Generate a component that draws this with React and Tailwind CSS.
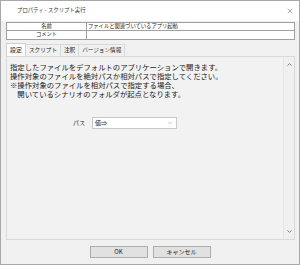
import { ChevronDown, ChevronUp, X } from 'lucide-react';

const jp = "font-['Noto_Sans_CJK_JP','Noto_Sans',sans-serif]";

const lines = [
  '指定したファイルをデフォルトのアプリケーションで開きます。',
  '操作対象のファイルを絶対パスか相対パスで指定してください。',
  '※操作対象のファイルを相対パスで指定する場合、',
  '\u3000開いているシナリオのフォルダが起点となります。',
];

const tabs = ['設定', 'スクリプト', '注釈', 'バージョン情報'];

export default function App() {
  return (
    <div className={`${jp} w-[300px] h-[265px] border border-[#a8a8a8] bg-[#f0f0f0] flex flex-col text-[#1a1a1a]`}>
      {/* Title bar */}
      <div className="h-[20px] bg-white flex items-center justify-between pl-[16px] pr-[5px] flex-shrink-0">
        <span className="text-[5.4px] leading-none text-[#333]">プロパティ - スクリプト実行</span>
        <X size={8} strokeWidth={1.5} className="text-[#555]" />
      </div>

      {/* Property table */}
      <div className="mt-[1px] ml-[5px] w-[289px] border border-[#a0a0a0] bg-white text-[5.3px] leading-none">
        <div className="flex h-[8px] border-b border-[#a0a0a0]">
          <div className="w-[80px] border-r border-[#a0a0a0] flex items-center justify-center">名前</div>
          <div className="flex-1 flex items-center pl-[1px]">ファイルと関連づいているアプリ起動</div>
        </div>
        <div className="flex h-[8px]">
          <div className="w-[80px] border-r border-[#a0a0a0] flex items-center justify-center">コメント</div>
          <div className="flex-1" />
        </div>
      </div>

      {/* Tabs */}
      <div className="mt-[3px] ml-[5px] flex items-end h-[13px] text-[5.6px] leading-none">
        {tabs.map((t, i) => (
          <div
            key={t}
            className={
              i === 0
                ? 'h-[13px] px-[3px] flex items-center bg-white border border-b-0 border-[#d0d0d0] text-[6px]'
                : 'h-[12px] px-[3px] flex items-center bg-[#f0f0f0] border border-b-0 border-l-0 border-[#d9d9d9]'
            }
          >
            {t}
          </div>
        ))}
      </div>

      {/* Panel */}
      <div className="ml-[5px] w-[289px] h-[184px] border border-[#d9d9d9] bg-[#f2f2f2] flex">
        <div className="flex-1 flex flex-col pl-[3px] pt-[5px]">
          <div className="text-[7.35px] leading-[9px]">
            {lines.map((l) => (
              <div key={l} className="whitespace-pre">{l}</div>
            ))}
          </div>
          <div className="mt-[19px] flex items-center">
            <span className="ml-[63px] w-[16px] text-[6px] leading-none">パス</span>
            <div className="ml-[3px] w-[85px] h-[12px] bg-white border border-[#c8c8c8] flex items-center justify-between pl-[2px] pr-[3px]">
              <span className="text-[6px] leading-none">値⇒</span>
              <ChevronDown size={6} strokeWidth={1.5} className="text-[#666]" />
            </div>
          </div>
        </div>
        <div className="w-[11px] border-l border-[#e6e6e6] bg-[#f0f0f0] flex flex-col items-center justify-between py-[4px]">
          <ChevronUp size={7} strokeWidth={2.5} className="text-[#555]" />
          <ChevronDown size={7} strokeWidth={2.5} className="text-[#555]" />
        </div>
      </div>

      {/* Buttons */}
      <div className="mt-[6px] flex justify-center gap-[5px] text-[6px] leading-none">
        <button className="w-[58px] h-[12px] bg-[#e1e1e1] border border-[#adadad] flex items-center justify-center">OK</button>
        <button className="w-[58px] h-[12px] bg-[#e1e1e1] border border-[#adadad] flex items-center justify-center">キャンセル</button>
      </div>
    </div>
  );
}
